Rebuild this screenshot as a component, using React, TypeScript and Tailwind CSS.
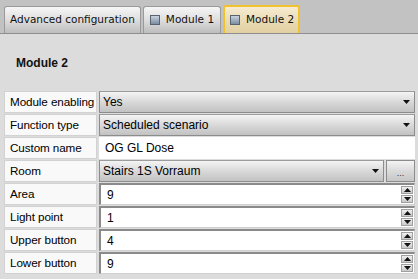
import { FC } from 'react';

const font = { fontFamily: '"Liberation Sans", Arial, sans-serif' };

const TabBox: FC = () => (
  <span className="inline-block w-[10px] h-[10px] border border-[#5a6470] bg-gradient-to-b from-[#c9d3df] to-[#7d8ea3] mr-[6px]" />
);

const Arrow: FC<{ up?: boolean }> = ({ up }) => (
  <svg width="7" height="4" viewBox="0 0 7 4" className="block">
    {up ? <polygon points="0,4 7,4 3.5,0" fill="#111" /> : <polygon points="0,0 7,0 3.5,4" fill="#111" />}
  </svg>
);

const Select: FC<{ value: string; className?: string }> = ({ value, className = '' }) => (
  <div
    className={`flex items-center h-full border border-[#8c8c8c] border-t-[#9c9c9c] bg-gradient-to-b from-[#f4f4f4] via-[#d9d9d9] to-[#c2c2c2] pl-[3px] pr-[4px] ${className}`}
  >
    <span className="flex-1 text-[12px] text-black">{value}</span>
    <Arrow />
  </div>
);

const NumberInput: FC<{ value: string }> = ({ value }) => (
  <div className="flex items-center h-full border-t-2 border-l-2 border-[#8a8a8a] border-b border-r border-b-[#d0d0d0] border-r-[#d0d0d0] bg-white">
    <span className="flex-1 pl-[6px] text-[12px] text-black">{value}</span>
    <div className="flex flex-col gap-[1px] h-full py-[1px] pr-[1px]">
      <div className="flex-1 w-[12px] flex items-center justify-center bg-gradient-to-b from-[#f0f0f0] to-[#c8c8c8] border border-[#a0a0a0]">
        <Arrow up />
      </div>
      <div className="flex-1 w-[12px] flex items-center justify-center bg-gradient-to-b from-[#f0f0f0] to-[#c8c8c8] border border-[#a0a0a0]">
        <Arrow />
      </div>
    </div>
  </div>
);

const rows: { label: string; kind: 'select' | 'text' | 'room' | 'number'; value: string }[] = [
  { label: 'Module enabling', kind: 'select', value: 'Yes' },
  { label: 'Function type', kind: 'select', value: 'Scheduled scenario' },
  { label: 'Custom name', kind: 'text', value: 'OG GL Dose' },
  { label: 'Room', kind: 'room', value: 'Stairs 1S Vorraum' },
  { label: 'Area', kind: 'number', value: '9' },
  { label: 'Light point', kind: 'number', value: '1' },
  { label: 'Upper button', kind: 'number', value: '4' },
  { label: 'Lower button', kind: 'number', value: '9' },
];

export default function App() {
  return (
    <div className="w-[418px] h-[279px] bg-[#dcdcdc] overflow-hidden" style={font}>
      {/* tabs */}
      <div
        className="h-[34px] bg-[#c2c2c2] border-b border-[#8e8e8e] flex items-end pl-[4px] gap-[2px]"
        style={{ fontFamily: '"DejaVu Sans", Verdana, sans-serif' }}
      >
        <div className="h-[27px] px-[5px] flex items-center rounded-t-[3px] border border-b-0 border-[#9a9a9a] bg-gradient-to-b from-[#f6f6f6] via-[#dedede] to-[#bdbdbd] text-[10.5px] text-[#111]">
          Advanced configuration
        </div>
        <div className="h-[27px] px-[6px] flex items-center rounded-t-[3px] border border-b-0 border-[#9a9a9a] bg-gradient-to-b from-[#f6f6f6] via-[#dedede] to-[#bdbdbd] text-[10.5px] text-[#111]">
          <TabBox />
          Module 1
        </div>
        <div className="h-[28px] pl-[5px] pr-[4px] flex items-center rounded-t-[3px] border-2 border-b-0 border-[#f2c12e] bg-gradient-to-b from-[#f6ecd2] via-[#eadcb6] to-[#e2d0a2] text-[10.5px] text-[#111]">
          <TabBox />
          Module 2
        </div>
      </div>

      {/* title */}
      <div className="h-[57px] flex items-center pl-[16px] text-[12px] font-bold text-[#111]">Module 2</div>

      {/* form rows */}
      <div className="flex flex-col gap-[1px] pl-[4px] pr-[3px]">
        {rows.map((r) => (
          <div key={r.label} className="flex h-[22px] gap-[2px]">
            <div className="w-[93px] shrink-0 bg-[#f9f9f9] border border-[#d2d2d2] pl-[5px] flex items-center text-[11.7px] tracking-[-0.1px] text-black whitespace-nowrap">
              {r.label}
            </div>
            <div className="flex-1 min-w-0">
              {r.kind === 'select' && <Select value={r.value} />}
              {r.kind === 'text' && (
                <div className="h-full bg-white flex items-center pl-[6px] text-[12px] text-black">{r.value}</div>
              )}
              {r.kind === 'room' && (
                <div className="flex h-full gap-[2px]">
                  <Select value={r.value} className="flex-1" />
                  <div className="w-[29px] h-full border border-[#8c8c8c] bg-gradient-to-b from-[#f4f4f4] via-[#dadada] to-[#c6c6c6] flex items-end justify-center pb-[3px] text-[9px] leading-none text-[#333]">
                    ...
                  </div>
                </div>
              )}
              {r.kind === 'number' && <NumberInput value={r.value} />}
            </div>
          </div>
        ))}
      </div>
    </div>
  );
}
